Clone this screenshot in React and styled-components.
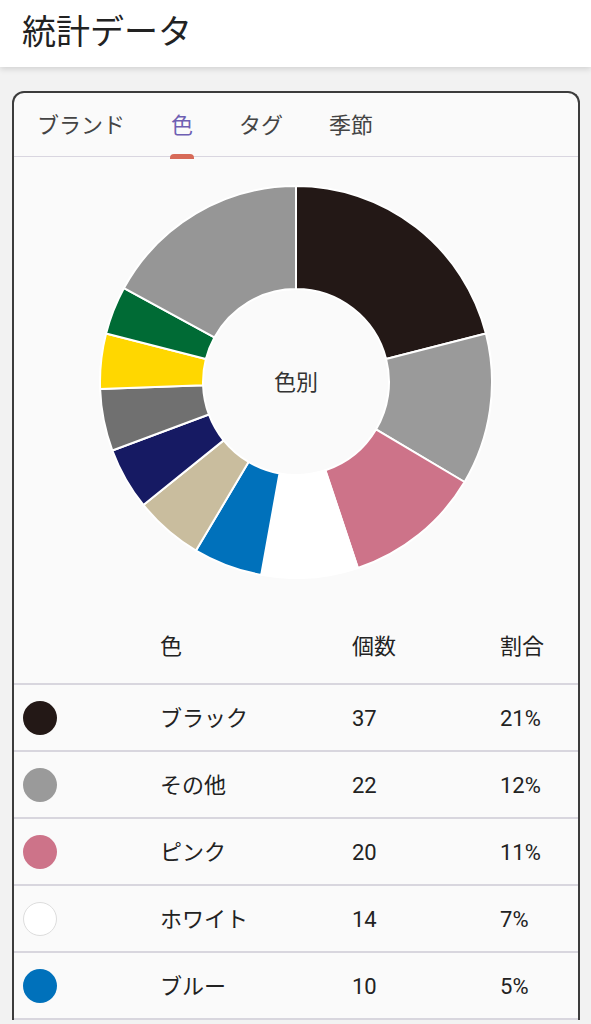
import React from "react";
import styled, { createGlobalStyle } from "styled-components";

const GlobalStyle = createGlobalStyle`
  html, body { margin: 0; padding: 0; }
  body {
    background: #f2f2f2;
    font-family: Roboto, "Noto Sans CJK JP", "Noto Sans", sans-serif;
    color: #222;
  }
`;

const Header = styled.header`
  height: 67px;
  background: #ffffff;
  box-shadow: 0 2px 6px rgba(0, 0, 0, 0.14);
  display: flex;
  align-items: center;
  padding-left: 22px;
  padding-bottom: 3px;
  box-sizing: border-box;
  position: relative;
  z-index: 1;
`;

const Title = styled.h1`
  margin: 0;
  font-size: 34px;
  font-weight: 400;
  line-height: 1.2;
  color: #222;
`;

const Main = styled.main`
  padding: 24px 11px 0 12px;
`;

const Card = styled.section`
  background: #fafafa;
  border: 2px solid #3c3c3c;
  border-bottom: none;
  border-radius: 12px 12px 0 0;
  overflow: hidden;
`;

const TabBar = styled.nav`
  display: flex;
  height: 64px;
  border-bottom: 1px solid #d9d6e0;
  box-sizing: border-box;
`;

const Tab = styled.div`
  position: relative;
  padding: 4px 23px 0;
  display: flex;
  align-items: center;
  font-size: 22px;
  line-height: 1.2;
  color: ${(p) => (p.$active ? "#6e5fb3" : "#444")};
`;

const Indicator = styled.span`
  position: absolute;
  left: 22px;
  right: 22px;
  bottom: -3px;
  height: 5px;
  border-radius: 4px 4px 0 0;
  background: #d76a58;
`;

const ChartArea = styled.div`
  display: flex;
  justify-content: center;
  padding: 28px 0 32px;
`;

const Row = styled.div`
  display: grid;
  grid-template-columns: 137px 192px 148px 1fr;
  align-items: center;
  padding-left: 9px;
  padding-top: ${(p) => (p.$head ? "0" : "3px")};
  height: ${(p) => (p.$head ? "74px" : "67px")};
  box-sizing: border-box;
  border-bottom: 2px solid #d8d6de;
  font-size: 22px;
  line-height: 1.2;
  color: #222;
`;

const Cell = styled.div``;

const Swatch = styled.span`
  display: block;
  width: 34px;
  height: 34px;
  margin-top: -3px;
  border-radius: 50%;
  background: ${(p) => p.$color};
  box-sizing: border-box;
  border: ${(p) => (p.$outline ? "1px solid #dddddd" : "none")};
`;

const segments = [
  { name: "ブラック", count: 37, color: "#231816" },
  { name: "その他", count: 22, color: "#9a9a9a" },
  { name: "ピンク", count: 20, color: "#cd7389" },
  { name: "ホワイト", count: 14, color: "#ffffff" },
  { name: "ブルー", count: 10, color: "#0071bb" },
  { name: "ベージュ", count: 10, color: "#c9bd9e" },
  { name: "ネイビー", count: 9, color: "#161a63" },
  { name: "グレー", count: 9, color: "#707070" },
  { name: "イエロー", count: 8, color: "#ffd700" },
  { name: "グリーン", count: 7, color: "#006b35" },
  { name: "シルバー", count: 30, color: "#969696" },
];

const total = segments.reduce((s, x) => s + x.count, 0);

function pt(cx, cy, rad, a) {
  const t = (a * Math.PI) / 180;
  return [cx + rad * Math.sin(t), cy - rad * Math.cos(t)];
}

function arcPath(cx, cy, R, r, a0, a1) {
  const large = a1 - a0 > 180 ? 1 : 0;
  const [x0, y0] = pt(cx, cy, R, a0);
  const [x1, y1] = pt(cx, cy, R, a1);
  const [x2, y2] = pt(cx, cy, r, a1);
  const [x3, y3] = pt(cx, cy, r, a0);
  return `M${x0} ${y0} A${R} ${R} 0 ${large} 1 ${x1} ${y1} L${x2} ${y2} A${r} ${r} 0 ${large} 0 ${x3} ${y3} Z`;
}

function Donut() {
  const size = 394;
  const c = size / 2;
  let a = 0;
  return (
    <svg width={size} height={size} viewBox={`0 0 ${size} ${size}`}>
      {segments.map((s) => {
        const a0 = a;
        const a1 = a + (s.count / total) * 360;
        a = a1;
        return (
          <path
            key={s.name}
            d={arcPath(c, c, 196, 93, a0, a1)}
            fill={s.color}
            stroke="#ffffff"
            strokeWidth="2"
            strokeLinejoin="round"
          />
        );
      })}
      <text
        x={c}
        y={c + 2}
        textAnchor="middle"
        dominantBaseline="middle"
        fontSize="22"
        fill="#333"
        fontFamily='Roboto, "Noto Sans CJK JP", sans-serif'
      >
        色別
      </text>
    </svg>
  );
}

const rows = segments.slice(0, 5);

export default function App() {
  const tabs = ["ブランド", "色", "タグ", "季節"];
  return (
    <>
      <GlobalStyle />
      <Header>
        <Title>統計データ</Title>
      </Header>
      <Main>
        <Card>
          <TabBar>
            {tabs.map((t) => (
              <Tab key={t} $active={t === "色"}>
                {t}
                {t === "色" && <Indicator />}
              </Tab>
            ))}
          </TabBar>
          <ChartArea>
            <Donut />
          </ChartArea>
          <Row $head>
            <Cell />
            <Cell>色</Cell>
            <Cell>個数</Cell>
            <Cell>割合</Cell>
          </Row>
          {rows.map((r) => (
            <Row key={r.name}>
              <Cell>
                <Swatch $color={r.color} $outline={r.color === "#ffffff"} />
              </Cell>
              <Cell>{r.name}</Cell>
              <Cell>{r.count}</Cell>
              <Cell>{Math.floor((r.count / total) * 100)}%</Cell>
            </Row>
          ))}
        </Card>
      </Main>
    </>
  );
}
